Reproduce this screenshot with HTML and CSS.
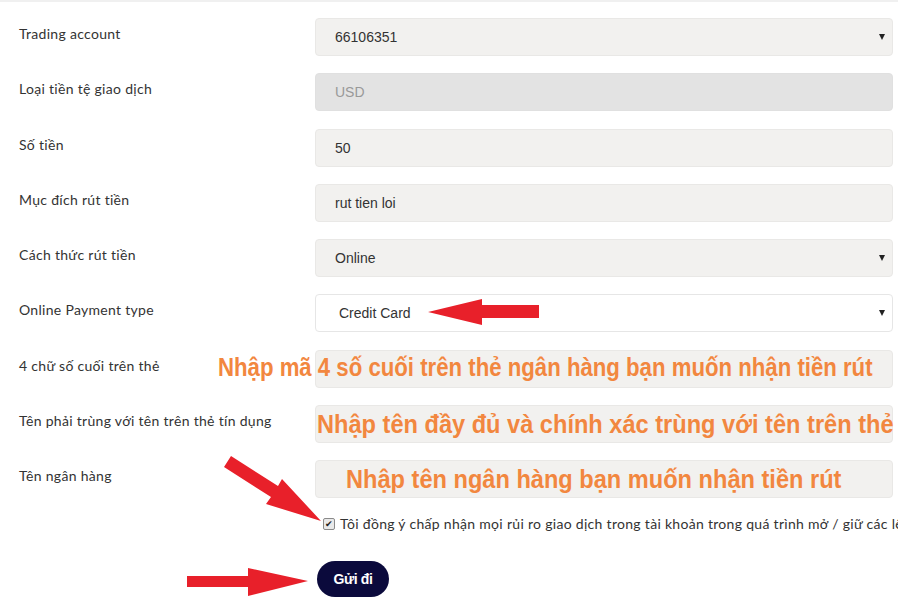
FILE: index.html
```html
<!DOCTYPE html>
<html lang="vi">
<head>
    <meta charset="UTF-8">
    <meta name="viewport" content="width=device-width, initial-scale=1.0">
    <title>Rút tiền</title>
    <link rel="stylesheet" href="styles.css">
</head>
<body>
    <form class="withdraw-form">
        <!-- Trading account -->
        <div class="form-row">
            <label>Trading account</label>
            <div class="select-wrap">
                <select class="control"><option>66106351</option></select>
            </div>
        </div>

        <div class="form-row">
            <label>Loại tiền tệ giao dịch</label>
            <input class="control disabled" type="text" value="USD" disabled>
        </div>

        <div class="form-row">
            <label>Số tiền</label>
            <input class="control" type="text" value="50">
        </div>

        <div class="form-row">
            <label>Mục đích rút tiền</label>
            <input class="control" type="text" value="rut tien loi">
        </div>

        <div class="form-row">
            <label>Cách thức rút tiền</label>
            <div class="select-wrap">
                <select class="control"><option>Online</option></select>
            </div>
        </div>

        <div class="form-row">
            <label>Online Payment type</label>
            <div class="select-wrap">
                <select class="control white"><option>Credit Card</option></select>
            </div>
        </div>

        <div class="form-row">
            <label>4 chữ số cuối trên thẻ</label>
            <div class="field">
                <input class="control" type="text">
                <span class="note note-card">Nhập mã 4 số cuối trên thẻ ngân hàng bạn muốn nhận tiền rút</span>
            </div>
        </div>

        <div class="form-row">
            <label>Tên phải trùng với tên trên thẻ tín dụng</label>
            <div class="field">
                <input class="control" type="text">
                <span class="note note-name">Nhập tên đầy đủ và chính xác trùng với tên trên thẻ</span>
            </div>
        </div>

        <div class="form-row">
            <label>Tên ngân hàng</label>
            <div class="field">
                <input class="control" type="text">
                <span class="note note-bank">Nhập tên ngân hàng bạn muốn nhận tiền rút</span>
            </div>
        </div>

        <!-- Agreement -->
        <div class="agree-row">
            <span class="check">&#10004;</span>
            <span class="agree-text">Tôi đồng ý chấp nhận mọi rủi ro giao dịch trong tài khoản trong quá trình mở / giữ các lệnh</span>
        </div>

        <div class="submit-row">
            <button type="button" class="btn-submit">Gửi đi</button>
        </div>
    </form>

    <!-- Red annotation arrows -->
    <svg class="arrows" width="898" height="601" viewBox="0 0 898 601">
        <polygon fill="#e8202a" points="428,312 482,299 482,305 539,305 539,318 482,318 482,325"/>
        <polygon fill="#e8202a" points="224,467 231,456 278,486 282,479 321,521 266,504 271,497"/>
        <polygon fill="#e8202a" points="187,576 248,576 248,568 308,581 248,596 248,587 187,587"/>
    </svg>
</body>
</html>
```

FILE: styles.css
```css
/* Reset */
* {
    box-sizing: border-box;
}

body {
    margin: 0;
    background: #fff;
    border-top: 2px solid #f0f0f0;
    font-family: Lato, "Open Sans", sans-serif;
    color: #333;
    overflow: hidden;
    position: relative;
    height: 601px;
}

/* Form */
.withdraw-form {
    padding: 16px 5px 0 19px;
}

.form-row {
    display: grid;
    grid-template-columns: 296px 1fr;
    margin-bottom: 17.25px;
}

.form-row label {
    font-size: 14px;
    line-height: 20px;
    letter-spacing: 0.3px;
    padding-top: 6px;
    color: #333;
}

.control {
    display: block;
    width: 100%;
    height: 38px;
    padding: 0 19px;
    border: 1px solid #e9e8e6;
    border-radius: 4px;
    background: #f2f1ef;
    font-family: "Liberation Sans", Arial, sans-serif;
    font-size: 14px;
    color: #333;
    outline: none;
    -webkit-appearance: none;
    appearance: none;
}

.control.disabled {
    background: #e3e3e3;
    border-color: #e0e0e0;
    color: #999;
}

.control.white {
    background: #fff;
    border-color: #e6e6e6;
    padding-left: 23px;
}

/* Select arrow */
.select-wrap {
    position: relative;
}

.select-wrap::after {
    content: "";
    position: absolute;
    right: 8px;
    top: 16px;
    border-left: 3px solid transparent;
    border-right: 3px solid transparent;
    border-top: 6px solid #222;
}

/* Orange annotations */
.field {
    position: relative;
}

.note {
    position: absolute;
    top: 6px;
    white-space: nowrap;
    font-family: "Liberation Sans", Arial, sans-serif;
    font-weight: bold;
    font-size: 22.2px;
    line-height: 28px;
    color: #f2873f;
    transform: scaleY(1.12);
    transform-origin: left bottom;
}

.note-card {
    left: -97px;
}

.note-name {
    left: 2px;
    top: 7px;
    font-size: 23.6px;
}

.note-bank {
    left: 31px;
    top: 7px;
    font-size: 23.6px;
}

/* Agreement */
.agree-row {
    display: flex;
    align-items: center;
    margin: 2px 0 0 304px;
    white-space: nowrap;
    font-size: 14px;
    letter-spacing: 0.3px;
    color: #333;
}

.check {
    display: inline-flex;
    align-items: center;
    justify-content: center;
    flex-shrink: 0;
    width: 12px;
    height: 12px;
    margin-right: 5px;
    border: 1px solid #8a8a8a;
    border-radius: 2px;
    background: #e9e9e9;
    font-size: 9px;
    line-height: 1;
    letter-spacing: 0;
    color: #222;
}

.submit-row {
    margin: 29px 0 0 298px;
}

.btn-submit {
    width: 72px;
    height: 36px;
    border: none;
    border-radius: 18px;
    background: #0b0a3c;
    color: #fff;
    font-family: "Liberation Sans", Arial, sans-serif;
    font-weight: bold;
    font-size: 14px;
    letter-spacing: -0.4px;
    cursor: pointer;
}

/* Arrows overlay */
.arrows {
    position: absolute;
    top: -2px;
    left: 0;
    pointer-events: none;
}
```
